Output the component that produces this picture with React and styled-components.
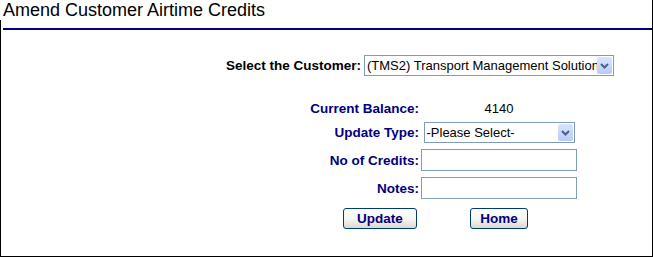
import React from "react";
import styled, { createGlobalStyle } from "styled-components";

const GlobalStyle = createGlobalStyle`
  html, body {
    margin: 0;
    padding: 0;
    background: #fff;
  }
  body {
    font-family: "Liberation Sans", Arial, sans-serif;
    font-size: 13px;
  }
`;

function App() {
  return (
    <Frame>
      <GlobalStyle />
      <Title>Amend Customer Airtime Credits</Title>
      <Content>
        <Rule />
        <CustomerRow>
          <BlackLabel>Select the Customer:</BlackLabel>
          <DropDown width={250} value="TMS2">
            <option value="TMS2">(TMS2) Transport Management Solutions</option>
          </DropDown>
        </CustomerRow>

        <FieldRow $h={20}>
          <Label>Current Balance:</Label>
          <Value>4140</Value>
        </FieldRow>
        <FieldRow $h={21} $mt={4}>
          <Label>Update Type:</Label>
          <DropDown width={151} value="">
            <option value="">-Please Select-</option>
          </DropDown>
        </FieldRow>
        <FieldRow $h={22} $mt={6}>
          <Label>No of Credits:</Label>
          <TextInput type="text" />
        </FieldRow>
        <FieldRow $h={22} $mt={6}>
          <Label>Notes:</Label>
          <TextInput type="text" />
        </FieldRow>
        <FieldRow $h={21} $mt={9}>
          <Button $w={74} $align="end">Update</Button>
          <Button $w={58} $align="center">Home</Button>
        </FieldRow>
      </Content>
    </Frame>
  );
}

const DropDown = ({ width, value, children }) => (
  <SelectWrap $w={width}>
    <Select value={value} onChange={() => {}}>
      {children}
    </Select>
    <ArrowButton>
      <svg width="9" height="6" viewBox="0 0 9 6">
        <path d="M1 1 L4.5 4.5 L8 1" fill="none" stroke="#4d6185" strokeWidth="2" />
      </svg>
    </ArrowButton>
  </SelectWrap>
);

const Frame = styled.div`
  width: 653px;
  height: 257px;
  box-sizing: border-box;
  display: flex;
  flex-direction: column;
  border-right: 1px solid #000;
  border-bottom: 1px solid #000;
`;

const Title = styled.div`
  height: 20px;
  box-sizing: border-box;
  padding: 1px 0 0 3px;
  font-size: 18px;
  line-height: 18px;
  color: #000;
  white-space: nowrap;
`;

const Content = styled.div`
  flex: 1;
  border-left: 1px solid #000;
  padding-top: 8px;
`;

const Rule = styled.div`
  height: 2px;
  margin-left: 2px;
  background: #000080;
`;

const CustomerRow = styled.div`
  display: flex;
  align-items: center;
  justify-content: flex-end;
  gap: 3px;
  height: 21px;
  margin-top: 25px;
  padding-right: 38px;
  margin-bottom: 22px;
`;

const BlackLabel = styled.span`
  font-weight: bold;
  font-size: 13.5px;
  color: #000;
`;

const FieldRow = styled.div`
  display: grid;
  grid-template-columns: 130px 156px;
  column-gap: 2px;
  align-items: center;
  height: ${(p) => p.$h}px;
  margin-top: ${(p) => p.$mt || 0}px;
  padding-left: 288px;
`;

const Label = styled.span`
  justify-self: end;
  font-weight: bold;
  font-size: 13.5px;
  color: #000080;
  white-space: nowrap;
`;

const Value = styled.span`
  justify-self: center;
  color: #000;
`;

const SelectWrap = styled.div`
  position: relative;
  justify-self: center;
  width: ${(p) => p.$w}px;
  height: 21px;
`;

const Select = styled.select`
  appearance: none;
  width: 100%;
  height: 100%;
  box-sizing: border-box;
  margin: 0;
  padding: 0 0 0 2px;
  border: 1px solid #7f9db9;
  border-radius: 0;
  background: #fff;
  font-family: "Liberation Sans", Arial, sans-serif;
  font-size: 13px;
  color: #000;
  outline: none;
`;

const ArrowButton = styled.span`
  position: absolute;
  top: 2px;
  right: 2px;
  bottom: 2px;
  width: 15px;
  display: flex;
  align-items: center;
  justify-content: center;
  border-radius: 2px;
  background: linear-gradient(#dbe5fd, #b7cbf9);
  pointer-events: none;
`;

const TextInput = styled.input`
  justify-self: center;
  width: 156px;
  height: 22px;
  box-sizing: border-box;
  margin: 0;
  border: 1px solid #7f9db9;
  background: #fff;
  font-family: "Liberation Sans", Arial, sans-serif;
  font-size: 13px;
`;

const Button = styled.button`
  justify-self: ${(p) => p.$align};
  margin-right: ${(p) => (p.$align === "end" ? 2 : 0)}px;
  width: ${(p) => p.$w}px;
  height: 21px;
  padding: 0;
  box-sizing: border-box;
  border: 1px solid #003c74;
  border-radius: 3px;
  background: linear-gradient(#ffffff, #f4f4f0 55%, #dcd8cc);
  font-family: "Liberation Sans", Arial, sans-serif;
  font-size: 13.5px;
  font-weight: bold;
  color: #000080;
`;

export default App;
